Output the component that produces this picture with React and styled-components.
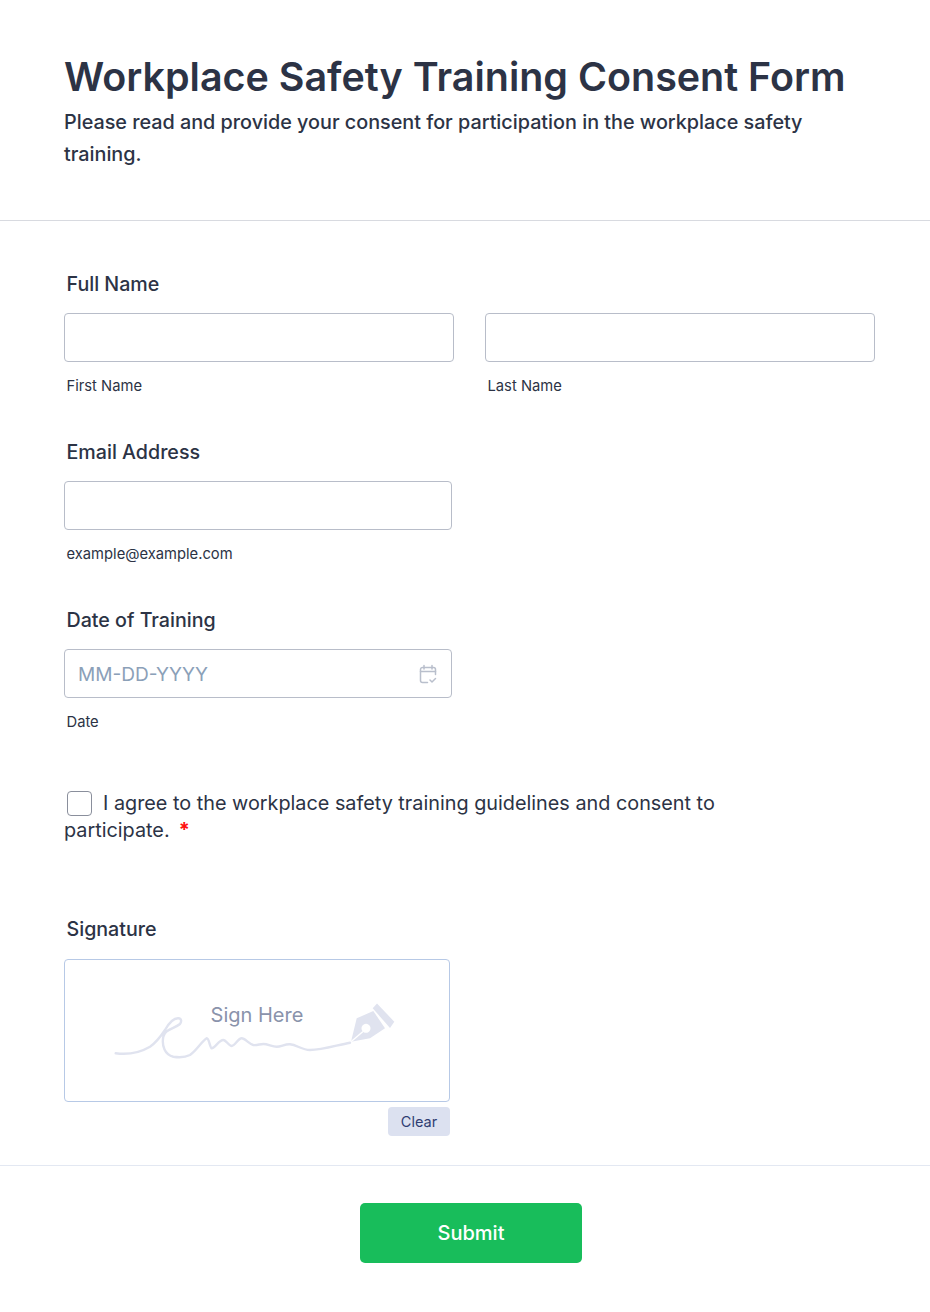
import React from 'react';
import styled, { createGlobalStyle } from 'styled-components';

const GlobalStyle = createGlobalStyle`
  html, body {
    margin: 0;
    padding: 0;
    background: #fff;
  }
  body {
    font-family: Inter, "Liberation Sans", sans-serif;
    color: #2c3345;
  }
  * { box-sizing: border-box; }
`;

const Page = styled.main`
  width: 930px;
  height: 1312px;
  overflow: hidden;
`;

const Header = styled.header`
  height: 221px;
  padding: 52px 64px 0;
  border-bottom: 1px solid #d8dae0;
`;

const Title = styled.h1`
  margin: 0;
  font-size: 39.45px;
  line-height: 50px;
  font-weight: 600;
  color: #2c3345;
`;

const Subtitle = styled.p`
  margin: 4px 0 0;
  width: 780px;
  font-size: 19.77px;
  line-height: 32px;
  font-weight: 500;
  color: #2c3345;
`;

const Form = styled.form`
  padding: 48px 55px 0 64px;
`;

const Field = styled.section`
  height: 168px;
`;

const Label = styled.div`
  padding-left: 2.5px;
  font-size: 19.65px;
  line-height: 30px;
  font-weight: 500;
  color: #2c3345;
`;

const Row = styled.div`
  display: flex;
  gap: 31px;
  margin-top: 14px;
`;

const Column = styled.div`
  width: ${p => p.$width}px;
`;

const Input = styled.div`
  display: flex;
  align-items: center;
  justify-content: space-between;
  height: 49px;
  padding: 0 13px;
  border: 1px solid #b8bdc9;
  border-radius: 4px;
  background: #fff;
`;

const Placeholder = styled.span`
  font-size: 19.1px;
  color: #8ba0b8;
`;

const Hint = styled.div`
  margin-top: 14px;
  padding-left: 2.5px;
  font-size: 14.75px;
  line-height: 20px;
  color: #2c3345;
`;

const Consent = styled.div`
  width: 680px;
  margin-top: 17px;
  font-size: 19.82px;
  line-height: 27px;
  color: #2c3345;
`;

const CheckBox = styled.span`
  display: inline-block;
  width: 25px;
  height: 25px;
  margin: 0 11px 0 3px;
  vertical-align: -6px;
  border: 1px solid #8a8f9c;
  border-radius: 4px;
`;

const Required = styled.span`
  margin-left: 9px;
  color: #ff1010;
  font-weight: 700;
`;

const SignatureField = styled.section`
  margin-top: 70px;
  height: 249px;
`;

const SignaturePad = styled.div`
  position: relative;
  width: 386px;
  height: 143px;
  margin-top: 15px;
  border: 1px solid #b7c9e6;
  border-radius: 4px;
`;

const SignHere = styled.span`
  position: absolute;
  top: 43px;
  left: 0;
  right: 0;
  text-align: center;
  font-size: 20px;
  line-height: 24px;
  color: #8a93ab;
`;

const ClearRow = styled.div`
  display: flex;
  justify-content: flex-end;
  width: 386px;
  margin-top: 5px;
`;

const ClearButton = styled.span`
  display: flex;
  align-items: center;
  justify-content: center;
  width: 62px;
  height: 29px;
  border-radius: 4px;
  background: #dce1f0;
  font-size: 14.5px;
  color: #2f3d72;
`;

const Footer = styled.footer`
  display: flex;
  justify-content: center;
  padding: 37px 0 0 12px;
  margin-top: 2px;
  border-top: 1px solid #e3e8f2;
`;

const Submit = styled.button`
  width: 222px;
  height: 60px;
  border: 0;
  border-radius: 5px;
  background: #18bd5b;
  color: #fff;
  font-family: inherit;
  font-size: 20px;
  font-weight: 500;
`;

const SignatureStroke = styled.svg`
  position: absolute;
  left: 0;
  top: 0;
`;

const CalendarIcon = () => (
  <svg width="20" height="20" viewBox="0 0 20 20" fill="none" stroke="#b9bfcc" strokeWidth="1.5" strokeLinecap="round" strokeLinejoin="round">
    <path d="M17.5 10.5V5.5a2 2 0 0 0-2-2h-11a2 2 0 0 0-2 2v11a2 2 0 0 0 2 2h5" />
    <path d="M2.5 7.5h15M6 1.5v3.5M14 1.5v3.5" />
    <path d="M12 16l2 2 3.5-3.5" />
  </svg>
);

const SignatureDrawing = () => (
  <SignatureStroke width="384" height="141" viewBox="0 0 384 141" fill="none">
    <path
      d="M50.7 93.3 C64 95 76 92 85 86.7 C92 82 96 76 100 70 C104 63 108 58 113.3 58.3 C117 58.6 116.5 62 115 64 C109 69 100 69 98.3 76.7 C96.5 86 100 95 108.3 96.7 C117 98 121 97 125 95 C132 90 136 82 141.7 78.3 C144 78 145 88 146.7 88.3 C150 88 154 80 158.3 80 C161 80 164 86 166.7 86 C170 86 173 78.3 176.7 78.3 C180 78.3 184 84 188.3 85 C192 85.5 195 84 198.3 84 C203 84 207 86.7 211.7 86.7 C216 86.7 220 84 225 84.3 C232 85 237 90 245 90 C258 90 272 85 285 82.7"
      stroke="#e0e3ef"
      strokeWidth="2.4"
      strokeLinecap="round"
    />
    <path
      d="M286 81.7 L291.7 58.3 L308.3 51 L320 68.3 L305 78.3 Z M301 63.8 a4.5 4.5 0 1 0 0.01 0 Z"
      fill="#e0e3ef"
      fillRule="evenodd"
    />
    <path d="M286 81.7 L298 71.5" stroke="#fff" strokeWidth="1.4" />
    <path d="M307.7 48.3 L312 43.5 L329.3 61.7 L325 68 Z" fill="#e0e3ef" />
  </SignatureStroke>
);

export default function App() {
  return (
    <Page>
      <GlobalStyle />
      <Header>
        <Title>Workplace Safety Training Consent Form</Title>
        <Subtitle>Please read and provide your consent for participation in the workplace safety training.</Subtitle>
      </Header>
      <Form>
        <Field>
          <Label>Full Name</Label>
          <Row>
            <Column $width={390}>
              <Input />
              <Hint>First Name</Hint>
            </Column>
            <Column $width={390}>
              <Input />
              <Hint>Last Name</Hint>
            </Column>
          </Row>
        </Field>
        <Field>
          <Label>Email Address</Label>
          <Row>
            <Column $width={388}>
              <Input />
              <Hint>example@example.com</Hint>
            </Column>
          </Row>
        </Field>
        <Field>
          <Label>Date of Training</Label>
          <Row>
            <Column $width={388}>
              <Input>
                <Placeholder>MM-DD-YYYY</Placeholder>
                <CalendarIcon />
              </Input>
              <Hint>Date</Hint>
            </Column>
          </Row>
        </Field>
        <Consent>
          <CheckBox />
          I agree to the workplace safety training guidelines and consent to participate.
          <Required>*</Required>
        </Consent>
        <SignatureField>
          <Label>Signature</Label>
          <SignaturePad>
            <SignHere>Sign Here</SignHere>
            <SignatureDrawing />
          </SignaturePad>
          <ClearRow>
            <ClearButton>Clear</ClearButton>
          </ClearRow>
        </SignatureField>
      </Form>
      <Footer>
        <Submit type="button">Submit</Submit>
      </Footer>
    </Page>
  );
}
